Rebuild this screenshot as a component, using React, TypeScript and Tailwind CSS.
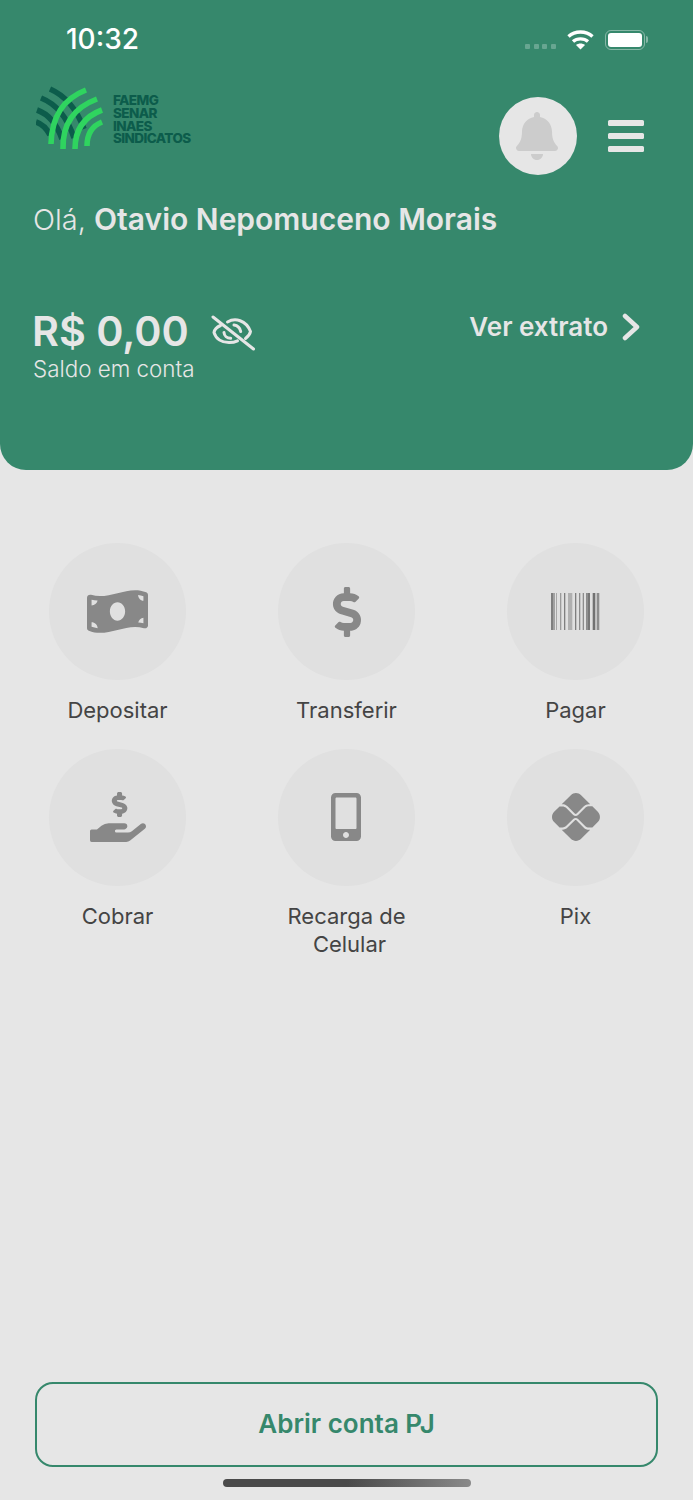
import { FaBell, FaDollarSign, FaHandHoldingUsd, FaMobileAlt, FaMoneyBillWave } from "react-icons/fa";
import { FaPix } from "react-icons/fa6";

function Logo() {
  return (
    <div className="flex items-center">
      <svg width="68" height="66" viewBox="36 86 68 66" className="shrink-0" fill="none" strokeWidth="5.6">
        <g stroke="#0c5c4b">
          <path d="M50 89 Q73 99 84 129" />
          <path d="M41 98 Q64 107 74 138" />
          <path d="M37 110 Q54 116 62 139" />
          <path d="M36 122 Q45 125 50 135" />
        </g>
        <g stroke="#2fd45f">
          <path d="M51 144 Q52 103 86 90" />
          <path d="M63 149 Q62 112 97 99" />
          <path d="M75 149 Q75 120 102 110" />
          <path d="M87 146 Q87 128 102 122" />
        </g>
      </svg>
      <div className="ml-[9px] mt-[1px] text-[13.5px] leading-[12.6px] font-extrabold tracking-[-0.6px] text-[#0c5c4b]">
        <div>FAEMG</div>
        <div>SENAR</div>
        <div>INAES</div>
        <div>SINDICATOS</div>
      </div>
    </div>
  );
}

function EyeOff() {
  return (
    <svg width="46" height="40" viewBox="0 0 46 40" fill="none" stroke="#e6e6e6" strokeWidth="3" strokeLinecap="round" strokeLinejoin="round">
      <path d="M2 3 L42.500 35" />
      <path d="M16.500 8 C24 3.500 35 6 39.500 17.500 C39 20.500 37 22.500 34.500 24.500" />
      <path d="M9.500 11.500 C6 13 3.500 15.500 3 18.500 C5 25 11 28.500 18 28.500 C21 28.500 24 28 26.500 26.800" />
      <path d="M23 11 C26.500 11.500 29 14 29.700 17.500" />
      <path d="M13 18.500 C13.200 21.800 16 24.300 19.700 24.300" />
    </svg>
  );
}

function Barcode() {
  const bars: [number, number, number][] = [
    [0, 2, 0.7], [2, 2, 0.45], [5, 0.8, 0.5], [9, 1.3, 0.5], [13, 1.3, 0.7], [17, 4.3, 0.35],
    [24, 1.3, 0.7], [28, 1.3, 0.6], [31.7, 1.3, 0.6], [35, 1.5, 0.6], [36.5, 2.5, 0.75], [41.7, 2.6, 0.8], [45.7, 2.6, 0.6],
  ];
  return (
    <svg width="49" height="37" viewBox="0 0 49 37">
      {bars.map(([x, w, o]) => (
        <rect key={x} x={x} y="0" width={w} height="37" fill="#555555" opacity={o} />
      ))}
    </svg>
  );
}

function Action({ label, icon, second }: { label: string; icon: React.ReactNode; second?: string }) {
  return (
    <div className="flex flex-col items-center">
      <div className="flex h-[137px] w-[137px] items-center justify-center rounded-full bg-[#e0e0e0] text-[#888888]">
        {icon}
      </div>
      <div className="mt-[16px] text-center text-[22px] leading-[28px] text-[#444444]">
        {label}
        {second && <div className="pl-[6px]">{second}</div>}
      </div>
    </div>
  );
}

export default function App() {
  return (
    <div className="flex h-[1500px] w-[693px] flex-col overflow-hidden bg-[#e6e6e6] font-['Inter',sans-serif]">
      <header className="h-[470px] shrink-0 rounded-b-[26px] bg-[#36886c]">
        <div className="flex h-[78px] items-start justify-between pl-[66px] pr-[45px] pt-[22px]">
          <div className="text-[28px] leading-[34px] font-medium text-white">10:32</div>
          <div className="flex items-center pt-[7px]">
            <div className="mt-[13px] flex gap-[3.600px]">
              <span className="h-[5px] w-[5px] rounded-[1px] bg-white/25" />
              <span className="h-[5px] w-[5px] rounded-[1px] bg-white/25" />
              <span className="h-[5px] w-[5px] rounded-[1px] bg-white/25" />
              <span className="h-[5px] w-[5px] rounded-[1px] bg-white/25" />
            </div>
            <svg className="ml-[11px]" width="27" height="21" viewBox="0 0 27 21" fill="none" stroke="white" strokeWidth="3.4">
              <path d="M1.500 7.500 C8 1.500 19 1.500 25.500 7.500" />
              <path d="M6 12.500 C10 9 17 9 21 12.500" />
              <path d="M13.500 20.500 L9 16 C11.500 14 15.500 14 18 16 Z" fill="white" stroke="none" />
            </svg>
            <div className="ml-[11px] flex items-center">
              <div className="h-[20px] w-[40px] rounded-[6px] border-[1.500px] border-white/40 p-[2px]">
                <div className="h-full w-full rounded-[3px] bg-white" />
              </div>
              <div className="ml-[1px] h-[7px] w-[2px] rounded-r-[2px] bg-white/40" />
            </div>
          </div>
        </div>

        <div className="flex h-[107px] items-start justify-between pl-[36px] pr-[49px]">
          <div className="mt-[8px]">
            <Logo />
          </div>
          <div className="mt-[19px] flex items-center">
            <div className="flex h-[78px] w-[78px] items-center justify-center rounded-full bg-[#e6e6e6]">
              <FaBell size={48} color="#cccccc" className="-ml-[2px]" />
            </div>
            <div className="ml-[31px] flex w-[36px] flex-col gap-[6.500px]">
              <span className="h-[6.500px] rounded-[1.500px] bg-[#e6e6e6]" />
              <span className="h-[6.500px] rounded-[1.500px] bg-[#e6e6e6]" />
              <span className="h-[6.500px] rounded-[1.500px] bg-[#e6e6e6]" />
            </div>
          </div>
        </div>

        <div className="mt-[16px] pl-[33px] text-[30px] leading-[36px] text-[#e6e6e6]">
          <span className="text-[29px] font-light">Olá, </span>
          <span className="font-semibold">Otavio Nepomuceno Morais</span>
        </div>

        <div className="mt-[68px] flex items-start justify-between pl-[33px] pr-[53px]">
          <div>
            <div className="flex items-center">
              <span className="-ml-[1px] text-[41.300px] leading-[50px] font-semibold text-[#e6e6e6]">R$ 0,00</span>
              <span className="ml-[22px] mt-[6px]">
                <EyeOff />
              </span>
            </div>
            <div className="text-[22.400px] leading-[26px] font-light text-[#e6e6e6]">Saldo em conta</div>
          </div>
          <div className="flex items-center pt-[6px]">
            <span className="text-[26px] leading-[30px] font-semibold text-[#e6e6e6]">Ver extrato</span>
            <svg className="ml-[14px]" width="18" height="28" viewBox="0 0 18 28" fill="none" stroke="#e6e6e6" strokeWidth="4.500" strokeLinecap="round" strokeLinejoin="round">
              <path d="M3 3 L15 14 L3 25" />
            </svg>
          </div>
        </div>
      </header>

      <main className="mt-[73px] grid grid-cols-[229px_229px_229px] gap-y-[25px] pl-[3px]">
        <Action label="Depositar" icon={<FaMoneyBillWave size={61} />} />
        <Action label="Transferir" icon={<FaDollarSign size={50} />} />
        <Action label="Pagar" icon={<Barcode />} />
        <Action label="Cobrar" icon={<FaHandHoldingUsd size={56} className="-mt-[1px]" />} />
        <Action label="Recarga de" second="Celular" icon={<FaMobileAlt size={48} className="-ml-[1px] -mt-[1px]" />} />
        <Action label="Pix" icon={<FaPix size={48} className="-mt-[1px]" />} />
      </main>

      <div className="mt-auto flex flex-col items-center">
        <button className="flex h-[85px] w-[623px] items-center justify-center rounded-[18px] border-2 border-[#36886c] pb-[2px] text-[26px] font-semibold text-[#36886c]">
          Abrir conta PJ
        </button>
        <div className="mb-[13px] mt-[12px] h-[8px] w-[248px] rounded-full bg-gradient-to-r from-[#4a4a4a] via-[#4a4a4a] to-[#8a8a8a]" />
      </div>
    </div>
  );
}
